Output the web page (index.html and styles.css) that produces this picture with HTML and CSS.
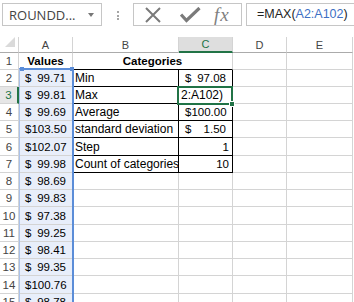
FILE: index.html
```html
<!DOCTYPE html>
<html lang="en">
<head>
    <meta charset="UTF-8">
    <title>Categories - Excel</title>
    <link rel="stylesheet" href="styles.css">
</head>
<body>

    <!-- Formula bar -->
    <div class="toolbar">
        <div class="namebox"><span>ROUNDD...</span><span class="caret"></span></div>
        <div class="grip"><i></i><i></i><i></i></div>
        <div class="fbtns">
            <svg class="icon-x" width="18" height="16" viewBox="0 0 18 16"><path d="M2 1 L16 15 M16 1 L2 15" stroke="#7a7a7a" stroke-width="2" fill="none"/></svg>
            <svg class="icon-ok" width="21" height="16" viewBox="0 0 21 16"><path d="M1 7.5 L6.5 13.5 L19.5 1" stroke="#7a7a7a" stroke-width="3.2" fill="none"/></svg>
            <span class="fx">fx</span>
        </div>
        <div class="formula">=MAX(<span class="ref">A2:A102</span>)</div>
    </div>

    <!-- Sheet -->
    <div class="sheet">
        <table class="grid">
            <colgroup>
                <col class="c-rh"><col class="c-a"><col class="c-b"><col class="c-c"><col class="c-d"><col class="c-e">
            </colgroup>
            <thead>
                <tr>
                    <th class="corner"><span class="tri"></span></th>
                    <th>A</th><th>B</th><th class="cur">C</th><th>D</th><th>E</th>
                </tr>
            </thead>
            <tbody>
                <tr>
                    <th class="rh">1</th>
                    <td class="title">Values</td>
                    <td class="title under" colspan="2">Categories</td>
                    <td></td><td></td>
                </tr>
                <tr>
                    <th class="rh">2</th>
                    <td class="val"><span class="sym">$</span>99.71</td>
                    <td class="txt box">Min</td>
                    <td class="money box"><span class="sym">$</span>97.08</td>
                    <td></td><td></td>
                </tr>
                <tr>
                    <th class="rh cur">3</th>
                    <td class="val"><span class="sym">$</span>99.81</td>
                    <td class="txt box">Max</td>
                    <td class="txt box">2:A102)</td>
                    <td></td><td></td>
                </tr>
                <tr>
                    <th class="rh">4</th>
                    <td class="val"><span class="sym">$</span>99.69</td>
                    <td class="txt box">Average</td>
                    <td class="money box"><span class="sym">$</span>100.00</td>
                    <td></td><td></td>
                </tr>
                <tr>
                    <th class="rh">5</th>
                    <td class="val"><span class="sym">$</span>103.50</td>
                    <td class="txt box">standard deviation</td>
                    <td class="money box"><span class="sym">$</span>1.50</td>
                    <td></td><td></td>
                </tr>
                <tr class="tall">
                    <th class="rh">6</th>
                    <td class="val"><span class="sym">$</span>102.07</td>
                    <td class="txt box">Step</td>
                    <td class="num box">1</td>
                    <td></td><td></td>
                </tr>
                <tr>
                    <th class="rh">7</th>
                    <td class="val"><span class="sym">$</span>99.98</td>
                    <td class="txt box">Count of categories</td>
                    <td class="num box">10</td>
                    <td></td><td></td>
                </tr>
                <tr>
                    <th class="rh">8</th>
                    <td class="val"><span class="sym">$</span>98.69</td>
                    <td></td><td></td><td></td><td></td>
                </tr>
                <tr>
                    <th class="rh">9</th>
                    <td class="val"><span class="sym">$</span>99.83</td>
                    <td></td><td></td><td></td><td></td>
                </tr>
                <tr class="tall">
                    <th class="rh">10</th>
                    <td class="val"><span class="sym">$</span>97.38</td>
                    <td></td><td></td><td></td><td></td>
                </tr>
                <tr>
                    <th class="rh">11</th>
                    <td class="val"><span class="sym">$</span>99.25</td>
                    <td></td><td></td><td></td><td></td>
                </tr>
                <tr>
                    <th class="rh">12</th>
                    <td class="val"><span class="sym">$</span>98.41</td>
                    <td></td><td></td><td></td><td></td>
                </tr>
                <tr>
                    <th class="rh">13</th>
                    <td class="val"><span class="sym">$</span>99.35</td>
                    <td></td><td></td><td></td><td></td>
                </tr>
                <tr class="tall">
                    <th class="rh">14</th>
                    <td class="val"><span class="sym">$</span>100.76</td>
                    <td></td><td></td><td></td><td></td>
                </tr>
                <tr>
                    <th class="rh">15</th>
                    <td class="val"><span class="sym">$</span>98.78</td>
                    <td></td><td></td><td></td><td></td>
                </tr>
            </tbody>
        </table>

        <!-- range referenced by the formula -->
        <div class="range"><span class="knob knob-l"></span><span class="knob knob-r"></span></div>
        <!-- active cell C3 -->
        <div class="cursor"><span class="fill"></span></div>
    </div>

</body>
</html>
```

FILE: styles.css
```css
html, body {
    margin: 0;
    overflow: hidden;
    background-color: #fff;
}
body {
    font-family: "Liberation Sans", Arial, sans-serif;
    color: #000;
}

/* formula bar */
.toolbar {
    display: flex;
    align-items: flex-start;
    height: 30px;
    padding-top: 3px;
    box-sizing: border-box;
}
.namebox {
    margin-left: 2px;
    width: 100px;
    height: 23px;
    box-sizing: border-box;
    border: 1px solid #c6c6c6;
    display: flex;
    align-items: center;
    justify-content: space-between;
    padding: 0 7px 0 6px;
    font: 13px "Open Sans", sans-serif;
    color: #444;
}
.caret {
    border-left: 3.5px solid transparent;
    border-right: 3.5px solid transparent;
    border-top: 4px solid #777;
}
.grip {
    width: 2px;
    margin: 8px 14px 0 15px;
    display: flex;
    flex-direction: column;
    gap: 1.5px;
}
.grip i {
    width: 2px;
    height: 2px;
    background-color: #a6a6a6;
}
.fbtns {
    width: 109px;
    height: 23px;
    box-sizing: border-box;
    border: 1px solid #c6c6c6;
    display: flex;
    align-items: center;
}
.icon-x {
    margin-left: 10px;
}
.icon-ok {
    margin-left: 18px;
}
.fx {
    margin-left: 13px;
    font: italic 19px "Liberation Serif", serif;
    color: #808080;
    line-height: 20px;
    letter-spacing: 1px;
}
.formula {
    margin-left: 4px;
    flex: 1;
    min-width: 0;
    height: 23px;
    box-sizing: border-box;
    border: 1px solid #c6c6c6;
    border-right: none;
    padding-left: 10px;
    font-size: 12.5px;
    line-height: 21px;
    white-space: nowrap;
    color: #222;
}
.ref {
    color: #3d6fc4;
}

/* sheet */
.sheet {
    position: relative;
    margin-top: 7px;
}
.grid {
    border-collapse: separate;
    border-spacing: 0;
    table-layout: fixed;
    width: 353px;
}
.c-rh { width: 19px; }
.c-a { width: 54px; }
.c-b { width: 106px; }
.c-c { width: 54px; }
.c-d { width: 54px; }
.c-e { width: 66px; }

.grid th, .grid td {
    padding: 0;
    border-right: 1px solid #d4d4d4;
    border-bottom: 1px solid #d4d4d4;
    overflow: hidden;
    white-space: nowrap;
    font-size: 11.5px;
}
.grid thead tr {
    height: 16px;
}
.grid thead th {
    font-weight: normal;
    font-size: 11px;
    color: #444;
    border-bottom-color: #ababab;
    background-color: #fff;
}
.grid thead th.cur {
    background-color: #dedede;
    color: #217346;
    border-bottom: 2px solid #217346;
}
.corner {
    text-align: right;
    vertical-align: bottom;
}
.tri {
    display: inline-block;
    margin: 0 3px 3px 0;
    border-left: 10px solid transparent;
    border-bottom: 10px solid #dadada;
}
.grid tbody tr {
    height: 17px;
}
.grid tbody tr.tall {
    height: 18px;
}
.rh {
    font-weight: normal;
    text-align: center;
    font-size: 11px;
    color: #444;
    background-color: #fff;
}
.rh.cur {
    background-color: #e6e6e6;
    color: #217346;
    border-right: 2px solid #217346;
}

.title {
    font-weight: bold;
    text-align: center;
}
.under {
    border-bottom-color: #000 !important;
}
.val {
    background-color: #e8eefa;
    padding: 0 6px !important;
    text-align: right;
}
.sym {
    float: left;
}
.grid td.txt {
    padding-left: 2px;
    font-size: 12px;
}
.money {
    padding: 0 6px !important;
    text-align: right;
}
.num {
    padding-right: 3px !important;
    text-align: right;
}
.grid td.box {
    border-right-color: #000;
    border-bottom-color: #000;
}

/* overlays */
.range {
    position: absolute;
    left: 19px;
    top: 31px;
    width: 55px;
    height: 300px;
    box-sizing: border-box;
    border: 2px solid #5b8dd8;
    border-left: 1px solid #a9c1ea;
}
.knob {
    position: absolute;
    top: -3px;
    width: 4px;
    height: 4px;
    background-color: #5b8dd8;
}
.knob-l { left: 0; }
.knob-r { right: -2px; }
.cursor {
    position: absolute;
    left: 177px;
    top: 49px;
    width: 56px;
    height: 19px;
    box-sizing: border-box;
    border: 2px solid #217346;
}
.fill {
    position: absolute;
    right: -4px;
    bottom: -4px;
    width: 4px;
    height: 4px;
    background-color: #217346;
    border: 1px solid #fff;
}
```
